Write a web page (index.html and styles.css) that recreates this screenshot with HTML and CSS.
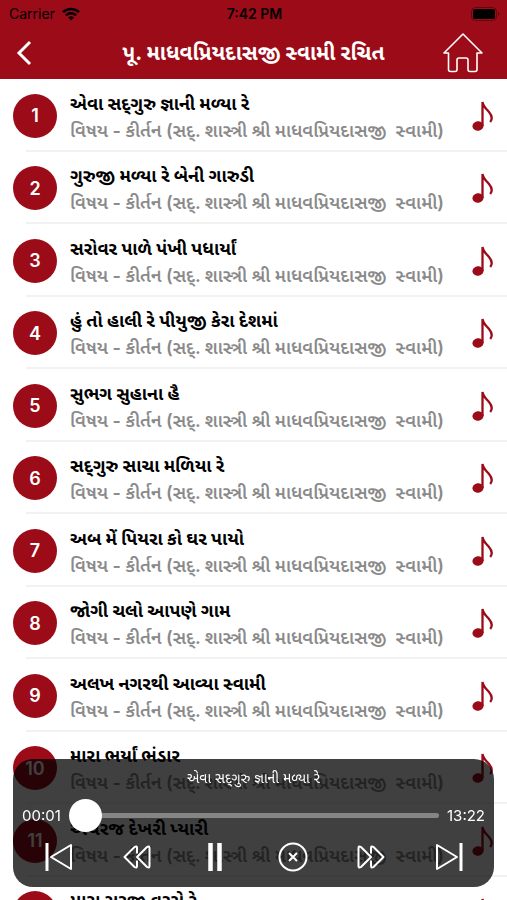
FILE: index.html
```html
<!DOCTYPE html>
<html lang="gu">
<head>
    <title>પૂ. માધવપ્રિયદાસજી સ્વામી રચિત</title>
    <meta charset="UTF-8">
    <meta name="viewport" content="width=device-width, initial-scale=1.0">
    <link rel="stylesheet" href="styles.css">
</head>
<body>
    <svg class="symbols" aria-hidden="true">
        <symbol id="note" viewBox="0 0 22 32">
            <ellipse cx="6" cy="26" rx="5.6" ry="4.7" transform="rotate(-8 6 26)" fill="currentColor"/>
            <path d="M10.500 26V2C11 6.500 14 8.500 17 12c3 3.500 4 6.500 1.200 10" fill="none" stroke="currentColor" stroke-width="2.300"/>
        </symbol>
    </svg>

    <header class="top">
        <div class="status-bar">
            <div class="carrier">
                Carrier
                <svg width="18" height="14" viewBox="0 0 18 14" fill="none" stroke="currentColor" stroke-width="2.4">
                    <path d="M1 5.200a11.500 11.500 0 0 1 16 0M3.900 8.300a7.300 7.300 0 0 1 10.200 0"/>
                    <path d="M9 13.500l-2.800-3a4 4 0 0 1 5.600 0z" fill="currentColor" stroke="none"/>
                </svg>
            </div>
            <div class="time">7:42 PM</div>
            <div class="battery">
                <svg width="29" height="14" viewBox="0 0 29 14">
                    <rect x="0.500" y="0.500" width="25" height="13" rx="4" fill="none" stroke="#000" stroke-opacity="0.350"/>
                    <rect x="2" y="2" width="22" height="10" rx="2" fill="#000"/>
                    <path d="M27 5v4c1.600-.6 1.600-3.400 0-4z" fill="#000" fill-opacity="0.400"/>
                </svg>
            </div>
        </div>
        <nav class="nav-bar">
            <button class="icon-button" aria-label="Back">
                <svg width="20" height="28" viewBox="0 0 20 28" fill="none" stroke="currentColor" stroke-width="3">
                    <path d="M16 3L5 14l11 11"/>
                </svg>
            </button>
            <h1>પૂ. માધવપ્રિયદાસજી સ્વામી રચિત</h1>
            <button class="icon-button home" aria-label="Home">
                <svg width="40" height="40" viewBox="0 0 40 40" fill="none" stroke="currentColor" stroke-width="1.600" stroke-linejoin="round">
                    <path d="M20 1L1 20h4.500v16.500q0 2 2 2H12q2 0 2-2V27q0-2 2-2h7q2 0 2 2v9.500q0 2 2 2h5q2 0 2-2V20H39z"/>
                </svg>
            </button>
        </nav>
    </header>

    <ul class="song-list">
        <li class="song">
            <span class="number">1</span>
            <div class="song-text">
                <h2>એવા સદ્‌ગુરુ જ્ઞાની મળ્યા રે</h2>
                <p>વિષય - કીર્તન (સદ્. શાસ્ત્રી શ્રી માધવપ્રિયદાસજી&nbsp; સ્વામી)</p>
            </div>
            <svg class="note"><use href="#note"/></svg>
        </li>
        <li class="song">
            <span class="number">2</span>
            <div class="song-text">
                <h2>ગુરુજી મળ્યા રે બેની ગારુડી</h2>
                <p>વિષય - કીર્તન (સદ્. શાસ્ત્રી શ્રી માધવપ્રિયદાસજી&nbsp; સ્વામી)</p>
            </div>
            <svg class="note"><use href="#note"/></svg>
        </li>
        <li class="song">
            <span class="number">3</span>
            <div class="song-text">
                <h2>સરોવર પાળે પંખી પધાર્યાં</h2>
                <p>વિષય - કીર્તન (સદ્. શાસ્ત્રી શ્રી માધવપ્રિયદાસજી&nbsp; સ્વામી)</p>
            </div>
            <svg class="note"><use href="#note"/></svg>
        </li>
        <li class="song">
            <span class="number">4</span>
            <div class="song-text">
                <h2>હું તો હાલી રે પીયુજી કેરા દેશમાં</h2>
                <p>વિષય - કીર્તન (સદ્. શાસ્ત્રી શ્રી માધવપ્રિયદાસજી&nbsp; સ્વામી)</p>
            </div>
            <svg class="note"><use href="#note"/></svg>
        </li>
        <li class="song">
            <span class="number">5</span>
            <div class="song-text">
                <h2>સુભગ સુહાના હૈ</h2>
                <p>વિષય - કીર્તન (સદ્. શાસ્ત્રી શ્રી માધવપ્રિયદાસજી&nbsp; સ્વામી)</p>
            </div>
            <svg class="note"><use href="#note"/></svg>
        </li>
        <li class="song">
            <span class="number">6</span>
            <div class="song-text">
                <h2>સદ્‌ગુરુ સાચા મળિયા રે</h2>
                <p>વિષય - કીર્તન (સદ્. શાસ્ત્રી શ્રી માધવપ્રિયદાસજી&nbsp; સ્વામી)</p>
            </div>
            <svg class="note"><use href="#note"/></svg>
        </li>
        <li class="song">
            <span class="number">7</span>
            <div class="song-text">
                <h2>અબ મેં પિયરા કો ઘર પાયો</h2>
                <p>વિષય - કીર્તન (સદ્. શાસ્ત્રી શ્રી માધવપ્રિયદાસજી&nbsp; સ્વામી)</p>
            </div>
            <svg class="note"><use href="#note"/></svg>
        </li>
        <li class="song">
            <span class="number">8</span>
            <div class="song-text">
                <h2>જોગી ચલો આપણે ગામ</h2>
                <p>વિષય - કીર્તન (સદ્. શાસ્ત્રી શ્રી માધવપ્રિયદાસજી&nbsp; સ્વામી)</p>
            </div>
            <svg class="note"><use href="#note"/></svg>
        </li>
        <li class="song">
            <span class="number">9</span>
            <div class="song-text">
                <h2>અલખ નગરથી આવ્યા સ્વામી</h2>
                <p>વિષય - કીર્તન (સદ્. શાસ્ત્રી શ્રી માધવપ્રિયદાસજી&nbsp; સ્વામી)</p>
            </div>
            <svg class="note"><use href="#note"/></svg>
        </li>
        <li class="song">
            <span class="number">10</span>
            <div class="song-text">
                <h2>મારા ભર્યાં ભંડાર</h2>
                <p>વિષય - કીર્તન (સદ્. શાસ્ત્રી શ્રી માધવપ્રિયદાસજી&nbsp; સ્વામી)</p>
            </div>
            <svg class="note"><use href="#note"/></svg>
        </li>
        <li class="song">
            <span class="number">11</span>
            <div class="song-text">
                <h2>અચરજ દેખરી પ્યારી</h2>
                <p>વિષય - કીર્તન (સદ્. શાસ્ત્રી શ્રી માધવપ્રિયદાસજી&nbsp; સ્વામી)</p>
            </div>
            <svg class="note"><use href="#note"/></svg>
        </li>
        <li class="song">
            <span class="number">12</span>
            <div class="song-text">
                <h2>મારા સરજી વરસે રે</h2>
                <p>વિષય - કીર્તન (સદ્. શાસ્ત્રી શ્રી માધવપ્રિયદાસજી&nbsp; સ્વામી)</p>
            </div>
            <svg class="note"><use href="#note"/></svg>
        </li>
    </ul>

    <section class="player">
        <label class="now-playing" for="seek">એવા સદ્‌ગુરુ જ્ઞાની મળ્યા રે</label>
        <div class="progress">
            <span>00:01</span>
            <input type="range" id="seek" class="seek" min="0" max="802" value="0">
            <span>13:22</span>
        </div>
        <div class="controls">
            <button class="icon-button" aria-label="Previous">
                <svg width="30" height="30" viewBox="0 0 30 30">
                    <path d="M3 1v28" stroke-width="3"/>
                    <path d="M27 3v24L7 15z"/>
                </svg>
            </button>
            <button class="icon-button" aria-label="Rewind">
                <svg width="30" height="30" viewBox="0 0 30 30">
                    <path d="M15 15L25 5q2.500-1.500 2.500 1v18q0 2.500-2.500 1zM15 11.500V6q0-2.500-2.500-1L2.500 15l10 10q2.500 1.500 2.500-1v-5.500"/>
                </svg>
            </button>
            <button class="icon-button" aria-label="Pause">
                <svg width="30" height="30" viewBox="0 0 30 30">
                    <path d="M10.500 1v28M19.500 1v28" stroke-width="4.500"/>
                </svg>
            </button>
            <button class="icon-button" aria-label="Close">
                <svg width="30" height="30" viewBox="0 0 30 30">
                    <circle cx="15" cy="15" r="13.500"/>
                    <path d="M11 11l8 8M19 11l-8 8"/>
                </svg>
            </button>
            <button class="icon-button" aria-label="Fast forward">
                <svg width="30" height="30" viewBox="0 0 30 30">
                    <path d="M15 11.500V6q0-2.500 2.500-1L27.500 15l-10 10q-2.500 1.500-2.500-1v-5.500M15 15L5 5Q2.500 3.500 2.500 6v18q0 2.500 2.500 1z"/>
                </svg>
            </button>
            <button class="icon-button" aria-label="Next">
                <svg width="30" height="30" viewBox="0 0 30 30">
                    <path d="M27 1v28" stroke-width="3"/>
                    <path d="M3 3v24l20-12z"/>
                </svg>
            </button>
        </div>
    </section>
</body>
</html>
```
FILE: styles.css
```css
* {
    box-sizing: border-box;
}
body {
    margin: 0;
    height: 100vh;
    display: flex;
    flex-direction: column;
    font-family: Inter, "Noto Sans Gujarati", "Noto Sans", sans-serif;
    background: #fff;
    color: #000;
}
h1, h2, p {
    margin: 0;
    white-space: nowrap;
}
.symbols {
    display: none;
}
.top {
    background: #9b0b18;
    flex: none;
}
.status-bar {
    height: 27px;
    padding: 0 7px 0 9px;
    display: grid;
    grid-template-columns: 1fr auto 1fr;
    align-items: center;
    font-size: 14px;
}
.carrier {
    display: flex;
    align-items: center;
    gap: 7px;
}
.time {
    font-weight: 600;
}
.battery {
    display: flex;
    justify-content: flex-end;
}
.nav-bar {
    height: 52px;
    padding: 0 24px 0 14px;
    display: grid;
    grid-template-columns: 50px 1fr 40px;
    align-items: center;
    color: #fff;
}
.nav-bar h1 {
    font-size: 21px;
    line-height: 28px;
    font-weight: 700;
    text-align: center;
}
.icon-button {
    background: none;
    border: none;
    padding: 0;
    color: #fff;
    display: flex;
    cursor: pointer;
}
.song-list {
    flex: 1;
    min-height: 0;
    margin: 0;
    padding: 0;
    list-style: none;
    display: grid;
    grid-auto-rows: 73px 72px;
    overflow-y: auto;
    scrollbar-width: none;
}
.song {
    display: flex;
    align-items: center;
    gap: 13px;
    padding: 0 13px;
    background: linear-gradient(#f2f2f2, #f2f2f2) 26px 100% / 100% 2px no-repeat;
}
.number {
    width: 44px;
    height: 44px;
    flex: none;
    display: flex;
    align-items: center;
    justify-content: center;
    border-radius: 50%;
    background: #9b0b18;
    color: #fff;
    font-size: 18px;
    font-weight: 600;
}
.song-text {
    flex: 1;
    min-width: 0;
    padding-top: 2px;
}
.song-text h2 {
    font-size: 18px;
    line-height: 27px;
    font-weight: 700;
}
.song-text p {
    font-size: 18px;
    line-height: 27px;
    font-weight: 600;
    color: #8a8a8a;
}
.note {
    width: 22px;
    height: 32px;
    flex: none;
    color: #9b0b18;
}

/* player lies over the list */
.player {
    position: fixed;
    left: 13px;
    right: 13px;
    bottom: 13px;
    height: 128px;
    padding: 8px 9px;
    border-radius: 20px;
    background: rgba(0, 0, 0, 0.75);
    color: #fff;
}
.now-playing {
    display: block;
    font-size: 14px;
    line-height: 22px;
    text-align: center;
}
.progress {
    display: flex;
    align-items: center;
    gap: 8px;
    height: 52px;
    font-size: 15px;
}
.seek {
    flex: 1;
    min-width: 0;
    height: 34px;
    margin: 0;
    appearance: none;
    background: none;
}
.seek::-webkit-slider-runnable-track {
    height: 5px;
    border-radius: 3px;
    background: #858585;
}
.seek::-webkit-slider-thumb {
    appearance: none;
    width: 33px;
    height: 33px;
    margin-top: -14px;
    border-radius: 50%;
    background: #fff;
}
.controls {
    display: flex;
    justify-content: space-between;
    padding: 1px 21px 0 22px;
}
.controls svg {
    fill: none;
    stroke: currentColor;
    stroke-width: 2;
    stroke-linejoin: round;
}
```
